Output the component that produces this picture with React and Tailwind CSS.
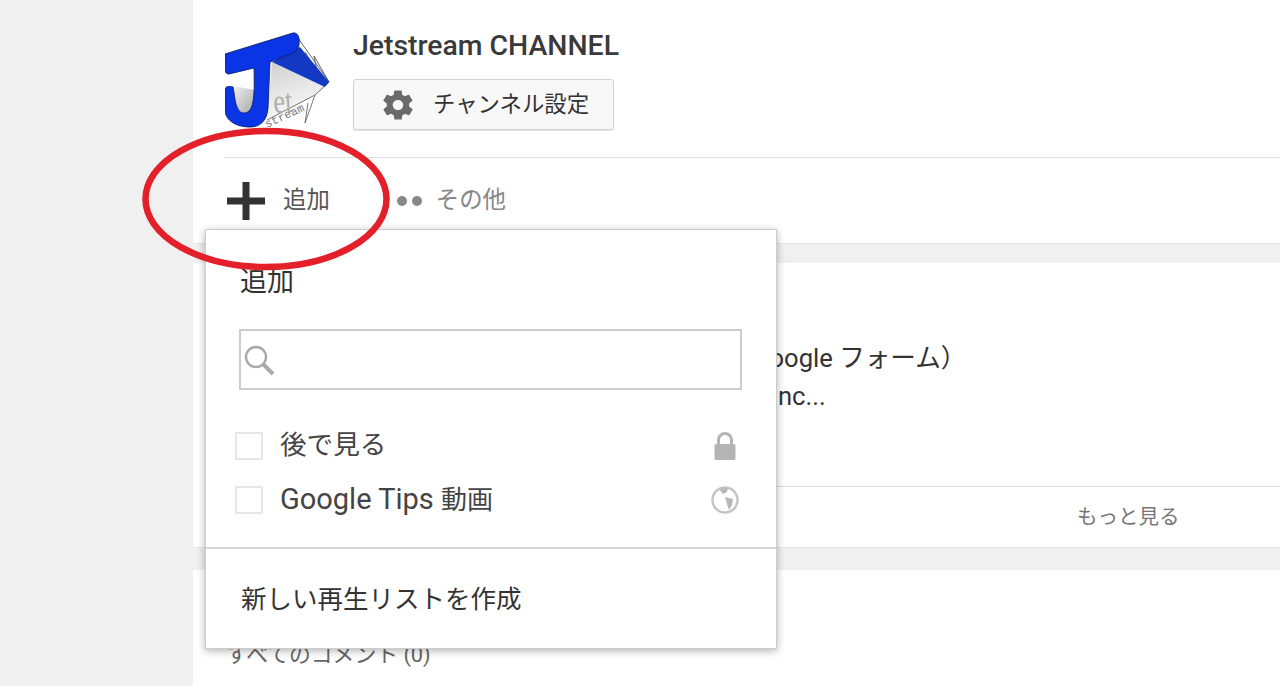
import { IoMdSettings } from "react-icons/io";

const FONT = "font-['Roboto','Noto_Sans_CJK_JP',sans-serif]";

const Logo = () => (
  <svg viewBox="0 0 105 100" className="w-[105px] h-[100px] shrink-0">
    <defs>
      <linearGradient id="fold" x1="0" y1="0" x2="0.3" y2="1">
        <stop offset="0" stopColor="#cfcfcf" />
        <stop offset="1" stopColor="#fbfbfb" />
      </linearGradient>
      <linearGradient id="cup" x1="0" y1="0" x2="1" y2="1">
        <stop offset="0" stopColor="#f2f2f2" />
        <stop offset="1" stopColor="#a4a4a4" />
      </linearGradient>
    </defs>
    <path d="M47 32 L100 57 L90 65 L42 92 Z" fill="url(#fold)" />
    <path d="M73 8 L104 52 M80 22 L92 42 L89 26 L104 52" fill="none" stroke="#555" strokeWidth="0.9" />
    <path d="M104 52 L90 65 M42 90 L90 65 L80 93 L83 73" fill="none" stroke="#666" strokeWidth="0.9" />
    <path d="M47 32 L75 17 L104 52 L100 57 Z" fill="#1238c4" />
    <path d="M8 56 L30 60 L29 78 L20 84 L10 78 Z" fill="url(#cup)" />
    <path
      d="M0 24 L68 3 C73 2 75 8 74 14 C74 20 68 24 60 26 L45 32 L43 78 C42 92 34 97 25 97 C8 97 0 88 0 80 L0 60 C0 56 4 56 8 57 C10 66 10 84 20 83 C28 82 30 70 29 38 L4 44 C1 44 0 42 0 38 Z"
      fill="#0a35e6"
      stroke="#10206a"
      strokeWidth="0.9"
    />
    <text x="49" y="83" fontSize="34" fill="#b0b0b0" fontFamily="Liberation Serif" textLength="19" lengthAdjust="spacingAndGlyphs" transform="rotate(-4 49 83)">
      et
    </text>
    <text x="42" y="98" fontSize="11.5" fill="#777" fontFamily="Liberation Mono" textLength="42" transform="rotate(-25 42 98)">
      stream
    </text>
  </svg>
);

const SearchIcon = () => (
  <svg viewBox="0 0 32 32" className="w-8 h-8 ml-[2px]">
    <circle cx="13" cy="13" r="10" fill="none" stroke="#aaa" strokeWidth="2.4" />
    <path d="M20 20 L30 30" stroke="#aaa" strokeWidth="4" />
  </svg>
);

const LockIcon = () => (
  <svg viewBox="0 0 22 28" className="w-[22px] h-7 -ml-[2px]">
    <path d="M4.5 13V8a6.5 6.5 0 0 1 13 0v5" fill="none" stroke="#b4b4b4" strokeWidth="3" />
    <rect x="0.5" y="12" width="21" height="16" rx="1.5" fill="#b4b4b4" />
  </svg>
);

const Globe = () => (
  <svg viewBox="0 0 28 28" className="w-7 h-7 -ml-[2px]">
    <circle cx="14" cy="14" r="12.5" fill="none" stroke="#c4c4c4" strokeWidth="2.4" />
    <path d="M8 3 L17 2 L16 6 L12 8 Z M14 11 L22 13 L21 19 L18 24 L16 18 Z" fill="#b8b8b8" />
  </svg>
);

const PlaylistRow = ({ children, icon }) => (
  <div className="flex items-center h-[28px]">
    <span className="w-7 h-7 border-2 border-[#e6e6e6] bg-white shrink-0" />
    <span className="ml-[17px] pt-[2px] leading-7 text-[#444] flex-1 whitespace-nowrap">{children}</span>
    <span className="w-7 h-7 flex items-center justify-center">{icon}</span>
  </div>
);

export default function App() {
  return (
    <div className={`${FONT} relative h-[686px] overflow-hidden bg-[#f0f0f0] flex`}>
      <div className="w-[193px] shrink-0" />

      <div className="flex-1 flex flex-col min-w-0">
        {/* channel card */}
        <section className="bg-white h-[244px] pl-8 flex flex-col border-b border-[#e4e4e4]">
          <div className="flex h-[158px] pt-[30px] border-b border-[#ddd]">
            <Logo />
            <div className="ml-[23px]">
              <div className="text-[28.4px] leading-[32px] font-medium text-[#3a3a3a]">Jetstream CHANNEL</div>
              <button className="mt-[17px] w-[261px] h-[51px] flex items-center pl-[26px] rounded-[3px] border border-[#d3d3d3] bg-[#f8f8f8] shadow-[0_1px_1px_rgba(0,0,0,0.12)] text-[#333]">
                <IoMdSettings className="text-[36px] text-[#6a6a6a]" />
                <span className="ml-[17px] text-[22.4px]">チャンネル設定</span>
              </button>
            </div>
          </div>
          <div className="flex items-center h-[84px] pl-[2px] pt-[1px]">
            <svg viewBox="0 0 38 38" className="w-[38px] h-[38px]">
              <path d="M15.5 0h7v15.5H38v7H22.5V38h-7V22.5H0v-7h15.5z" fill="#333" />
            </svg>
            <span className="ml-[18px] text-[23.4px] text-[#555]">追加</span>
            <div className="ml-[67px] flex gap-[5px]">
              <span className="w-[10px] h-[10px] rounded-full bg-[#888]" />
              <span className="w-[10px] h-[10px] rounded-full bg-[#888]" />
            </div>
            <span className="ml-[14px] text-[23.4px] text-[#888]">その他</span>
          </div>
        </section>

        {/* description card */}
        <section className="mt-[19px] bg-white h-[285px] flex flex-col border-b border-[#e4e4e4]">
          <div className="h-[224px] pt-[76px] pl-[527px] text-[25.6px] leading-[38px] text-[#333] whitespace-nowrap border-b border-[#ddd] ml-8">
            <div>Google フォーム）</div>
            <div className="pl-[19px]">Inc...</div>
          </div>
          <div className="flex-1 flex items-center pt-[1px]">
            <span className="ml-[884px] text-[20.5px] text-[#777]">もっと見る</span>
          </div>
        </section>

        {/* comments card */}
        <section className="mt-[22px] bg-white flex-1 pl-[33px] pt-[70px]">
          <span className="text-[21.8px] leading-[30px] text-[#666]">すべてのコメント (0)</span>
        </section>
      </div>

      {/* add to playlist popup */}
      <div className="absolute left-[205px] top-[229px] w-[572px] h-[420px] bg-white border border-[#ccc] shadow-[0_2px_8px_rgba(0,0,0,0.3)]">
        <div className="pl-[34px] pt-[32px] text-[27px] leading-10 text-[#333]">追加</div>
        <div className="ml-[33px] mt-[27px] w-[503px] h-[61px] border-2 border-[#ccc] flex items-center">
          <SearchIcon />
        </div>
        <div className="ml-[29px] mt-[42px] mr-[36px] flex flex-col gap-[26px]">
          <PlaylistRow icon={<LockIcon />}>
            <span className="text-[26.6px]">後で見る</span>
          </PlaylistRow>
          <PlaylistRow icon={<Globe />}>
            <span className="text-[29px]">Google Tips </span>
            <span className="text-[26px]">動画</span>
          </PlaylistRow>
        </div>
        <div className="mt-[33px] border-t-2 border-[#d8d8d8] pl-[35px] pt-[32px] text-[25.5px] leading-9 text-[#333]">
          新しい再生リストを作成
        </div>
      </div>

      {/* red annotation */}
      <svg viewBox="0 0 250 146" className="absolute left-[141px] top-[126px] w-[250px] h-[146px] pointer-events-none">
        <ellipse cx="125" cy="73" rx="120.5" ry="68" fill="none" stroke="#e3202a" strokeWidth="6.5" />
      </svg>
    </div>
  );
}
